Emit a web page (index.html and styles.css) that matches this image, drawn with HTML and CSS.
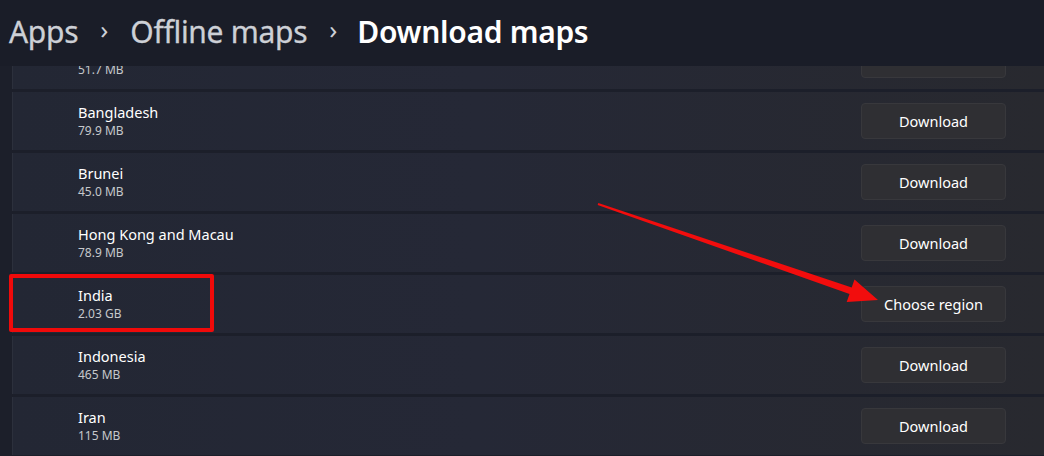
FILE: index.html
```html
<!DOCTYPE html>
<html lang="en">
<head>
    <meta charset="UTF-8">
    <meta name="viewport" content="width=device-width, initial-scale=1.0">
    <title>Download maps</title>
    <link rel="stylesheet" href="styles.css">
</head>
<body>
    <!-- Cabeçalho com breadcrumb -->
    <header class="topbar">
        <span class="crumb">Apps</span>
        <span class="sep">&#8250;</span>
        <span class="crumb">Offline maps</span>
        <span class="sep">&#8250;</span>
        <span class="crumb current">Download maps</span>
    </header>

    <!-- Lista de países -->
    <main class="scroller">
        <div class="list">
            <div class="row">
                <div class="info"><div class="name">Bahrain</div><div class="size">51.7 MB</div></div>
                <button class="btn">Download</button>
            </div>
            <div class="row">
                <div class="info"><div class="name">Bangladesh</div><div class="size">79.9 MB</div></div>
                <button class="btn">Download</button>
            </div>
            <div class="row">
                <div class="info"><div class="name">Brunei</div><div class="size">45.0 MB</div></div>
                <button class="btn">Download</button>
            </div>
            <div class="row">
                <div class="info"><div class="name">Hong Kong and Macau</div><div class="size">78.9 MB</div></div>
                <button class="btn">Download</button>
            </div>
            <div class="row">
                <span class="mark"></span>
                <div class="info"><div class="name">India</div><div class="size">2.03 GB</div></div>
                <button class="btn">Choose region</button>
            </div>
            <div class="row">
                <div class="info"><div class="name">Indonesia</div><div class="size">465 MB</div></div>
                <button class="btn">Download</button>
            </div>
            <div class="row">
                <div class="info"><div class="name">Iran</div><div class="size">115 MB</div></div>
                <button class="btn">Download</button>
            </div>
        </div>
    </main>

    <!-- Seta vermelha apontando para o botão -->
    <svg class="arrow" width="1044" height="456" viewBox="0 0 1044 456">
        <polygon fill="#f20d0d" points="598.3,203.1 851.7,287.5 854.5,279.5 878,300 846.7,302.1 849.5,294.1 597.7,204.9"/>
    </svg>
</body>
</html>
```

FILE: styles.css
```css
/* Corpo da página */
body {
    margin: 0;
    width: 1044px;
    height: 456px;
    overflow: hidden;
    position: relative;
    background-color: #1c1f2a;
    color: #ffffff;
    font-family: "Noto Sans", "Open Sans", sans-serif;
}

/* Cabeçalho */
.topbar {
    height: 66px;
    display: flex;
    align-items: center;
    gap: 22px;
    padding: 0 0 4px 9px;
    box-sizing: border-box;
    background-color: #1a1d28;
    position: relative;
    z-index: 2;
}

.crumb {
    font-size: 30px;
    color: #cdd0d6;
    letter-spacing: -0.3px;
    -webkit-text-stroke: 0.3px #cdd0d6;
}

.crumb.current {
    color: #ffffff;
    font-weight: 600;
    margin-left: -2px;
    -webkit-text-stroke: 0;
}

.sep {
    font-size: 26px;
    color: #cdd0d6;
    margin-top: -4px;
}

/* Área rolável da lista */
.scroller {
    height: 390px;
    overflow: hidden;
    padding-left: 12px;
}

.list {
    margin-top: -35px;
    display: flex;
    flex-direction: column;
    gap: 3px;
}

/* Cada linha */
.row {
    position: relative;
    height: 58px;
    display: flex;
    align-items: center;
    justify-content: space-between;
    padding: 0 38px 0 65px;
    background: linear-gradient(90deg, #232734 0%, #252836 45%, #28292f 100%);
    border-left: 1px solid #2c303c;
}

.name {
    font-size: 14.5px;
    line-height: 19px;
}

.size {
    font-size: 12px;
    line-height: 17px;
    color: #c6c8cc;
}

/* Botões */
.btn {
    width: 145px;
    height: 36px;
    background-color: #2f2f33;
    border: 1px solid #38383c;
    border-radius: 4px;
    color: #ffffff;
    font-family: inherit;
    font-size: 14.5px;
    cursor: pointer;
}

.btn:hover {
    background-color: #38383c;
}

/* Destaque vermelho ao redor da linha */
.mark {
    position: absolute;
    left: -4px;
    top: -1px;
    width: 197px;
    height: 50px;
    border: 4px solid #f00a0a;
    border-radius: 2px;
}

/* Seta sobreposta */
.arrow {
    position: absolute;
    left: 0;
    top: 0;
    pointer-events: none;
    z-index: 3;
}
```
